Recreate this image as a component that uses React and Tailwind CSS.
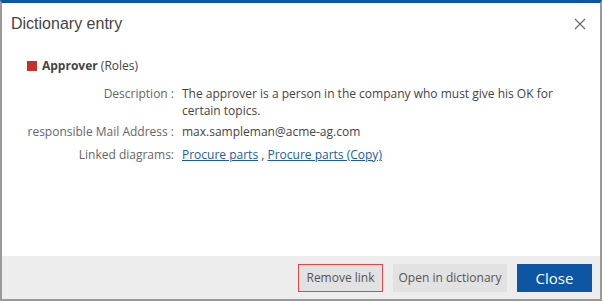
import React from 'react';

const rows = [
  { label: 'Description :', value: 'The approver is a person in the company who must give his OK for certain topics.' },
  { label: 'responsible Mail Address :', value: 'max.sampleman@acme-ag.com' },
];

export default function App() {
  return (
    <div className="w-[603px] h-[302px] bg-white" style={{ fontFamily: '"Open Sans", sans-serif' }}>
      <div className="w-[602px] h-[301px] flex flex-col border-x-2 border-b-2 border-[#9a9a9a] border-t-[3px] border-t-[#0d56a4]">
        {/* header */}
        <div className="flex items-center justify-between pl-[9px] pr-[14px] h-[40px] pt-[1px]">
          <h1 className="text-[16px] text-[#444] font-['Liberation_Sans_Narrow',sans-serif]">Dictionary entry</h1>
          <button className="text-[#666]">
            <svg width="12" height="12" viewBox="0 0 12 12" stroke="currentColor" strokeWidth="1.1" fill="none">
              <path d="M1 1 L11 11 M11 1 L1 11" />
            </svg>
          </button>
        </div>

        {/* body */}
        <div className="flex-1 px-[25px] pt-[14px] text-[12px] text-[#444]">
          <div className="flex items-center gap-[5px]">
            <span className="w-[10px] h-[10px] bg-[#c9302c]" />
            <span><span className="font-bold">Approver</span> (Roles)</span>
          </div>
          <div className="mt-[10px] flex flex-col gap-[4px]">
            {rows.map(r => (
              <div key={r.label} className="flex leading-[17px]">
                <div className="w-[147px] text-right text-[#666] shrink-0 whitespace-nowrap">{r.label}</div>
                <div className="pl-[8px] w-[395px]">{r.value}</div>
              </div>
            ))}
            <div className="flex leading-[17px] mt-[2px]">
              <div className="w-[147px] text-right text-[#666] shrink-0 whitespace-nowrap">Linked diagrams:</div>
              <div className="pl-[8px]">
                <a className="text-[#1a5ca6] underline" href="#">Procure parts</a>
                {' , '}
                <a className="text-[#1a5ca6] underline" href="#">Procure parts (Copy)</a>
              </div>
            </div>
          </div>
        </div>

        {/* footer */}
        <div className="h-[43px] bg-[#ededed] flex items-start justify-end gap-[10px] pt-[8px] pr-[8px] text-[12px]">
          <button className="h-[28px] w-[85px] border border-[#f04040] bg-[#e2e2e2] text-[#555]">Remove link</button>
          <button className="h-[28px] w-[114px] bg-[#e2e2e2] text-[#555]">Open in dictionary</button>
          <button className="h-[28px] w-[75px] bg-[#0d56a4] text-white text-[15px]">Close</button>
        </div>
      </div>
    </div>
  );
}
